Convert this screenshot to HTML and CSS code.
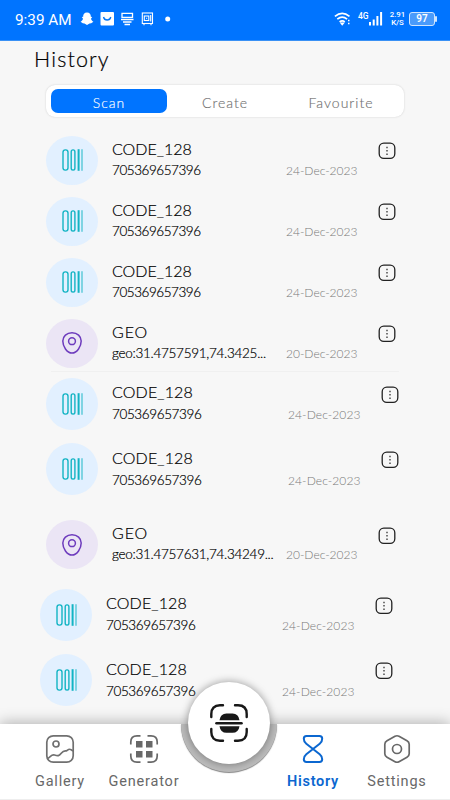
FILE: index.html
```
<!DOCTYPE html>
<html lang="en">
<head>
<meta charset="utf-8">
<title>History</title>
<link rel="stylesheet" href="styles.css">
</head>
<body>
<svg class="defs" width="0" height="0">
  <symbol id="bars" viewBox="0 0 22 24"><g fill="none" stroke="#13b4c4" stroke-width="1.4"><rect x="2" y="1.9" width="5" height="20.2" rx="2.3"/><rect x="10.2" y="1.900" width="3.700" height="20.200" rx="1.800"/><path d="M17.600 1.200v21.600" stroke-width="2"/><path d="M21 1.200v21.600" stroke-width="1.200" opacity=".8"/></g></symbol>
  <symbol id="pin" viewBox="0 0 22 24"><g fill="none" stroke="#6d3bbd" stroke-width="1.500"><path d="M11 1.800c5.300 0 9.200 3.500 9.200 8.300 0 5-4 12-9.200 12S1.800 15.100 1.800 10.100C1.800 5.300 5.700 1.800 11 1.800Z"/><circle cx="11" cy="10.200" r="3.400"/></g></symbol>
  <symbol id="more" viewBox="0 0 18 18"><rect x="1.200" y="1.200" width="15.600" height="15.200" rx="4.600" fill="none" stroke="#222" stroke-width="1.300"/><path d="M9 4.800v1.500M9 8.100v1.500M9 11.400v1.500" stroke="#222" stroke-width="1.200"/></symbol>
</svg>
<div class="status">
  <span class="clock">9:39 AM</span>
  <svg class="apps" width="96" height="16" viewBox="0 0 96 16" fill="#fff">
    <path d="M7 1.500c2.600 0 4 1.800 3.800 4.300l1.400.2-1.200 1.700c.4 1.500 1.300 2.400 2.400 3l-2.200 1.500-1.700.2L7 14l-2.500-1.600-1.700-.2L.6 10.700c1.100-.6 2-1.500 2.400-3L1.800 6l1.400-.2C3 3.300 4.400 1.500 7 1.500Z"/>
    <rect x="20.500" y="1" width="13.500" height="13.500" rx="1"/><path d="M23.500 6c.8 4 6.500 4 7.300 0" fill="none" stroke="#0878f5" stroke-width="1.300"/>
    <path d="M42 2.300h10.500v4H42zM41 8.500h12.500M43 11h8.500M44.500 13.500h5.500" fill="none" stroke="#fff" stroke-width="1.300"/>
    <g fill="none" stroke="#fff" stroke-width="1.100"><rect x="62.300" y="2" width="10.200" height="10.500"/><rect x="64.300" y="5" width="4.500" height="4.500"/><path d="M64 12.500V14.300M71 12.500V14.300M70.700 4v6.500M66 7.200h1.200"/></g>
    <circle cx="87.700" cy="8" r="2.500"/>
  </svg>
  <svg class="wifi" width="18" height="16" viewBox="0 0 18 16" fill="none" stroke="#fff" stroke-width="1.700"><path d="M.9 5.300q7.300-6 14.600 0M3.300 8.200q4.900-4 9.800 0M5.600 10.900q2.600-2.100 5.200 0"/><path d="M7 12.200h2.500L8.200 13.800ZM14 9.500h1.500M14 12.500h1.500" stroke-width="1.300"/></svg>
  <span class="gen">4G</span>
  <svg class="signal" width="15" height="16" viewBox="0 0 15 16" stroke="#fff" stroke-width="2"><path d="M2 11v3.500M5.700 8.500v6M9.400 5v9.500M13.100 1v13.500"/></svg>
  <span class="rate"><span>2.91</span><span>K/S</span></span>
  <span class="battery">97</span>
</div>
<h1>History</h1>
<div class="tabs"><span class="tab active">Scan</span><span class="tab">Create</span><span class="tab">Favourite</span></div>
<main class="list">
  <article class="row"><span class="disc"><svg><use href="#bars"/></svg></span><div class="text"><b>CODE_128</b><p>705369657396</p></div><time>24-Dec-2023</time><svg class="more"><use href="#more"/></svg></article>
  <article class="row"><span class="disc"><svg><use href="#bars"/></svg></span><div class="text"><b>CODE_128</b><p>705369657396</p></div><time>24-Dec-2023</time><svg class="more"><use href="#more"/></svg></article>
  <article class="row"><span class="disc"><svg><use href="#bars"/></svg></span><div class="text"><b>CODE_128</b><p>705369657396</p></div><time>24-Dec-2023</time><svg class="more"><use href="#more"/></svg></article>
  <article class="row ruled"><span class="disc geo"><svg><use href="#pin"/></svg></span><div class="text"><b class="kind">GEO</b><p class="place">geo:31.4757591,74.3425...</p></div><time>20-Dec-2023</time><svg class="more"><use href="#more"/></svg></article>
  <article class="row large"><span class="disc"><svg><use href="#bars"/></svg></span><div class="text"><b>CODE_128</b><p>705369657396</p></div><time>24-Dec-2023</time><svg class="more"><use href="#more"/></svg></article>
  <article class="row large last-large"><span class="disc"><svg><use href="#bars"/></svg></span><div class="text"><b>CODE_128</b><p>705369657396</p></div><time>24-Dec-2023</time><svg class="more"><use href="#more"/></svg></article>
  <article class="row spaced"><span class="disc geo"><svg><use href="#pin"/></svg></span><div class="text"><b class="kind">GEO</b><p class="place">geo:31.4757631,74.34249...</p></div><time>20-Dec-2023</time><svg class="more"><use href="#more"/></svg></article>
  <article class="row large shifted"><span class="disc"><svg><use href="#bars"/></svg></span><div class="text"><b>CODE_128</b><p>705369657396</p></div><time>24-Dec-2023</time><svg class="more"><use href="#more"/></svg></article>
  <article class="row large shifted"><span class="disc"><svg><use href="#bars"/></svg></span><div class="text"><b>CODE_128</b><p>705369657396</p></div><time>24-Dec-2023</time><svg class="more"><use href="#more"/></svg></article>
</main>
<nav class="bar">
  <a class="item"><svg width="30" height="30" viewBox="0 0 30 30" fill="none" stroke="#707070" stroke-width="1.700"><rect x="1.800" y="1.800" width="26.400" height="26.400" rx="6.500"/><circle cx="11" cy="10" r="3"/><path d="M2.500 24.500c3-1.500 4-4.500 7-3.500 3.500 1.200 4.500 1 7-2s4-1.500 5.500-2.500 2.500-2.500 6 .5"/></svg><span>Gallery</span></a>
  <a class="item"><svg width="30" height="30" viewBox="0 0 30 30" fill="none" stroke="#686868" stroke-width="1.700"><path d="M1.800 10.500V8q0-6.200 6.200-6.200h3.500M18.500 1.800H22q6.200 0 6.200 6.200v2.500M28.200 19.500V22q0 6.200-6.200 6.200h-3.500M11.500 28.200H8q-6.200 0-6.200-6.200v-2.500"/><path d="M7 7h6.500v6.500H7zM17 7h6.500v6.500H17zM7 17h6.500v6.500H7zM17 17h6.500v6.500H17z" fill="#686868" stroke="none"/></svg><span>Generator</span></a>
  <span class="gap"></span>
  <a class="item on"><svg width="30" height="30" viewBox="0 0 30 30" fill="none" stroke="#0b67d0" stroke-width="2"><path d="M8.500 2h13q2.700 0 2.700 2.700 0 3.100-2.500 5.100L8.300 20.200q-2.500 2-2.500 5.100 0 2.700 2.700 2.700h13q2.700 0 2.700-2.700 0-3.100-2.500-5.100L8.300 9.800Q5.800 7.800 5.800 4.700 5.800 2 8.500 2Z"/></svg><span>History</span></a>
  <a class="item"><svg width="30" height="30" viewBox="0 0 30 30" fill="none" stroke="#686868" stroke-width="1.700"><path d="M13 2.300q2-1.100 4 0l8 4.500q2.200 1.200 2.200 3.500v9.400q0 2.300-2.200 3.500l-8 4.500q-2 1.100-4 0l-8-4.500q-2.200-1.200-2.200-3.500v-9.400Q2.800 8 5 6.800Z"/><circle cx="15" cy="15" r="4.500"/></svg><span>Settings</span></a>
  <span class="notch"></span>
  <span class="scan"><svg width="40" height="40" viewBox="0 0 40 40" fill="none" stroke="#181818" stroke-width="2.400" stroke-linecap="round"><path d="M2.300 14V11q0-8.700 8.700-8.700h3M26 2.300h3q8.700 0 8.700 8.700v3M37.700 26v3q0 8.700-8.700 8.700h-3M14 37.700h-3q-8.700 0-8.700-8.700v-3"/><path d="M7.500 20.200h25" stroke-width="2.600"/><path d="M10.500 17.200q1-6.700 7-6.700h6q6 0 7 6.700ZM10.500 23.200h20q-1 6.600-7 6.600h-6q-6 0-7-6.600Z" fill="#181818" stroke="none"/></svg></span>
</nav>
</body>
</html>
```
FILE: styles.css
```
* { box-sizing: border-box; }
body { margin: 0; width: 450px; height: 800px; overflow: hidden; position: relative; background: #f7f7f7; font-family: Lato, "Open Sans", sans-serif; font-weight: 300; color: #000; }
.defs { position: absolute; }
.status { height: 41px; background: #0074ff; display: flex; align-items: flex-start; padding: 0 14px 0 15px; color: #fff; font-family: Roboto, sans-serif; border-bottom: 1px solid #3a91f5; }
.clock { font-size: 15.300px; line-height: 40px; width: 65px; white-space: nowrap; font-weight: 400; }
.apps { margin-top: 11px; }
.wifi { margin: 11px 6px 0 158px; }
.gen { font-size: 8.500px; line-height: 10px; margin-top: 11px; width: 10px; font-weight: 500; white-space: nowrap; }
.signal { margin: 11px 6px 0 0; }
.rate { width: 17px; display: flex; flex-direction: column; align-items: center; font-size: 7.800px; line-height: 8.300px; margin-top: 11px; font-weight: 500; white-space: nowrap; }
.battery { position: relative; width: 26px; height: 14px; margin: 12px 0 0 3px; border: 1px solid #cfe5ff; border-radius: 3px; background: #4a9bfb; font-size: 10px; line-height: 12px; text-align: center; font-weight: 600; }
.battery::after { content: ""; position: absolute; right: -3px; top: 3px; width: 2px; height: 6px; background: #cfe5ff; border-radius: 1px; }
h1 { margin: 5px 0 0 34px; height: 26px; line-height: 26px; font-size: 21.500px; font-weight: 300; letter-spacing: 1.150px; -webkit-text-stroke: .2px #000; }
.tabs { margin: 13px 46px 0 46px; height: 32px; display: flex; background: #fff; border-radius: 9px; padding: 4px 5px; box-shadow: 0 0 2px #ccc; color: #707070; }
.tab { width: 116px; height: 24px; line-height: 27px; text-align: center; font-size: 14px; letter-spacing: 1px; font-weight: 300; -webkit-text-stroke: .15px; }
.active { background: #0074ff; color: #fff; border-radius: 7px; }
.list { padding: 18.500px 0 0 46px; }
.row { height: 49px; margin-bottom: 12px; display: flex; align-items: flex-start; position: relative; }
.disc { flex: none; width: 52px; height: 49px; border-radius: 50%; background: #e2f0ff; display: flex; align-items: center; justify-content: center; }
.disc svg { width: 22px; height: 24px; }
.disc.geo { background: #ebe5f5; }
.text { flex: none; width: 175px; padding: 2px 0 0 14px; white-space: nowrap; -webkit-text-stroke: .2px #000; }
.text b { display: block; font-weight: 300; font-size: 16px; line-height: 22px; height: 22px; letter-spacing: 0; }
.text .kind { letter-spacing: .9px; }
.text p { margin: 0; font-size: 13.500px; line-height: 21px; letter-spacing: -.45px; }
.text .place { letter-spacing: -.28px; }
time { flex: none; width: 85px; padding: 24px 0 0 13px; font-size: 12px; line-height: 21px; color: #777; white-space: nowrap; }
.more { flex: none; width: 18px; height: 18px; margin: 6.800px 0 0 19.500px; }
.ruled { margin-bottom: 10px; }
.ruled::after { content: ""; position: absolute; left: 5px; top: 52px; width: 348px; height: 1px; background: #f0f0f0; }
.large { height: 52px; margin-bottom: 13.500px; }
.large .disc { height: 52px; }
.large .text { padding-top: 3.500px; }
.large .text b { height: 23px; letter-spacing: .15px; }
.large .text p { letter-spacing: -.38px; }
.large time { padding: 26.500px 0 0 15px; letter-spacing: .1px; }
.large .more { margin: 8px 0 0 23px; }
.last-large { margin-bottom: 25px; }
.spaced { margin-bottom: 19.500px; }
.shifted { margin-left: -6px; }
.bar { position: absolute; left: 0; bottom: 0; width: 450px; height: 76px; background: #fff; box-shadow: 0 -1px 14px rgba(0,0,0,.3); border-bottom: 1px solid #eee; display: flex; padding: 10px 11px 0 18px; font-family: Roboto, sans-serif; }
.item { width: 84px; display: flex; flex-direction: column; align-items: center; color: #686868; }
.item span { font-size: 14.500px; line-height: 20px; margin-top: 8px; letter-spacing: .8px; font-weight: 400; }
.on { color: #0b67d0; }
.item.on span { font-weight: 600; letter-spacing: .7px; }
.gap { width: 85px; }
.notch { position: absolute; left: 181px; top: 0; width: 96px; height: 48px; border-radius: 0 0 48px 48px; background: #bcbcbc; box-shadow: 0 1px 1px #888; }
.scan { position: absolute; left: 188px; top: -42px; width: 82px; height: 82px; border-radius: 50%; background: #fff; display: flex; align-items: center; justify-content: center; box-shadow: 0 0 8px rgba(0,0,0,.4); }
```
